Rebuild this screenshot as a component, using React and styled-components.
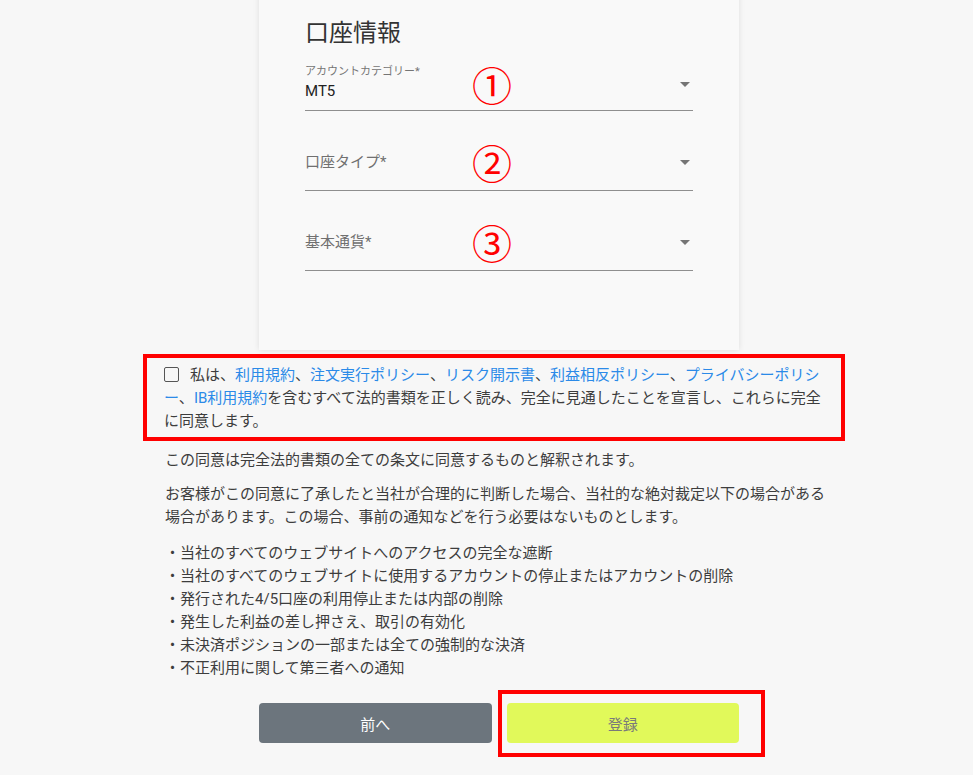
import React from "react";
import styled, { createGlobalStyle } from "styled-components";

const links = ["利用規約", "注文実行ポリシー", "リスク開示書", "利益相反ポリシー", "プライバシーポリシー"];

const bullets = [
  "当社のすべてのウェブサイトへのアクセスの完全な遮断",
  "当社のすべてのウェブサイトに使用するアカウントの停止またはアカウントの削除",
  "発行された4/5口座の利用停止または内部の削除",
  "発生した利益の差し押さえ、取引の有効化",
  "未決済ポジションの一部または全ての強制的な決済",
  "不正利用に関して第三者への通知",
];

export default function App() {
  return (
    <>
      <GlobalStyle />
      <Page>
        <Card>
          <Title>口座情報</Title>
          <Field>
            <Stack>
              <SmallLabel>アカウントカテゴリー*</SmallLabel>
              <Value>MT5</Value>
            </Stack>
            <Arrow bottom={23} />
            <Marker top={4}>①</Marker>
          </Field>
          <Field>
            <Stack>
              <Placeholder>口座タイプ*</Placeholder>
            </Stack>
            <Arrow bottom={25} />
            <Marker top={2}>②</Marker>
          </Field>
          <Field>
            <Stack>
              <Placeholder>基本通貨*</Placeholder>
            </Stack>
            <Arrow bottom={25} />
            <Marker top={2}>③</Marker>
          </Field>
        </Card>

        <Section>
          <AgreeBox>
            <Check />
            私は、
            {links.map((l) => (
              <React.Fragment key={l}>
                <Link>{l}</Link>、
              </React.Fragment>
            ))}
            <Link>IB利用規約</Link>
            を含むすべて法的書類を正しく読み、完全に見通したことを宣言し、これらに完全に同意します。
          </AgreeBox>
          <Para first>この同意は完全法的書類の全ての条文に同意するものと解釈されます。</Para>
          <Para>
            お客様がこの同意に了承したと当社が合理的に判断した場合、当社的な絶対裁定以下の場合がある場合があります。この場合、事前の通知などを行う必要はないものとします。
          </Para>
          <List>
            {bullets.map((b) => (
              <li key={b}>・{b}</li>
            ))}
          </List>
        </Section>

        <ButtonRow>
          <Button>前へ</Button>
          <Highlighted>
            <Button primary>登録</Button>
            <Frame />
          </Highlighted>
        </ButtonRow>
      </Page>
    </>
  );
}

function Arrow({ bottom }) {
  return (
    <ArrowSvg width="10" height="5" viewBox="0 0 10 5" bottom={bottom}>
      <path d="M0 0 L10 0 L5 5 Z" fill="#757575" />
    </ArrowSvg>
  );
}

const GlobalStyle = createGlobalStyle`
  body {
    margin: 0;
    background: #f7f7f7;
    font-family: Roboto, "Noto Sans CJK JP", sans-serif;
    color: #3d3d3d;
  }
`;

const Page = styled.div`
  display: flex;
  flex-direction: column;
  align-items: center;
  padding-left: 25px;
  padding-bottom: 20px;
`;

const Card = styled.div`
  box-sizing: border-box;
  width: 480px;
  margin-top: -10px;
  padding: 27px 46px 79px;
  background: #f9f9f9;
  box-shadow: 0 0 6px rgba(0, 0, 0, 0.1);
  display: flex;
  flex-direction: column;
  gap: 29px;
`;

const Title = styled.h2`
  margin: 0 0 -18px;
  font-size: 24px;
  line-height: 32px;
  font-weight: 400;
  color: #333;
`;

const Field = styled.div`
  position: relative;
  display: flex;
  align-items: flex-end;
  height: 50px;
  border-bottom: 1px solid #8f8f8f;
`;

const Stack = styled.div`
  flex: 1;
  display: flex;
  flex-direction: column;
`;

const SmallLabel = styled.span`
  font-size: 11px;
  line-height: 14px;
  color: #757575;
  margin-bottom: 2px;
`;

const Value = styled.span`
  font-size: 15px;
  line-height: 20px;
  color: #222;
  margin-bottom: 9px;
`;

const Placeholder = styled.span`
  font-size: 15px;
  line-height: 20px;
  color: #707070;
  margin-bottom: 18px;
`;

const ArrowSvg = styled.svg`
  margin: 0 3px ${(p) => p.bottom}px 0;
`;

const Marker = styled.span`
  position: absolute;
  left: 167px;
  top: ${(p) => p.top}px;
  font-family: "Noto Sans CJK JP", sans-serif;
  font-size: 40px;
  line-height: 40px;
  color: #ff0000;
`;

const Section = styled.div`
  width: 670px;
  font-size: 15px;
  line-height: 23px;
`;

const AgreeBox = styled.div`
  margin: 4px -11px 0 -21px;
  padding: 6px 13px 4px 17px;
  border: 4px solid #ff0000;
`;

const Check = styled.span`
  display: inline-block;
  box-sizing: border-box;
  width: 15px;
  height: 15px;
  border: 1.5px solid #555;
  border-radius: 2px;
  vertical-align: -2px;
  margin-right: 11px;
`;

const Link = styled.a`
  color: #2b8ae8;
  text-decoration: none;
`;

const Para = styled.p`
  margin: ${(p) => (p.first ? "8px" : "11px")} 0 0;
  padding-left: 1px;
`;

const List = styled.ul`
  list-style: none;
  margin: 13px 0 0;
  padding: 0 0 0 1px;
`;

const ButtonRow = styled.div`
  width: 480px;
  margin-top: 23px;
  display: grid;
  grid-template-columns: 1fr 1fr;
  gap: 15px;
`;

const Highlighted = styled.div`
  position: relative;
`;

const Frame = styled.span`
  position: absolute;
  top: -13px;
  left: -9px;
  right: -26px;
  bottom: -14px;
  border: 4px solid #ff0000;
  pointer-events: none;
`;

const Button = styled.button`
  width: 100%;
  height: 40px;
  border: none;
  border-radius: 4px;
  font-family: Roboto, "Noto Sans CJK JP", sans-serif;
  font-size: 15px;
  background: ${(p) => (p.primary ? "#e1f95a" : "#6c757d")};
  color: ${(p) => (p.primary ? "#7a7a7a" : "#fff")};
`;
